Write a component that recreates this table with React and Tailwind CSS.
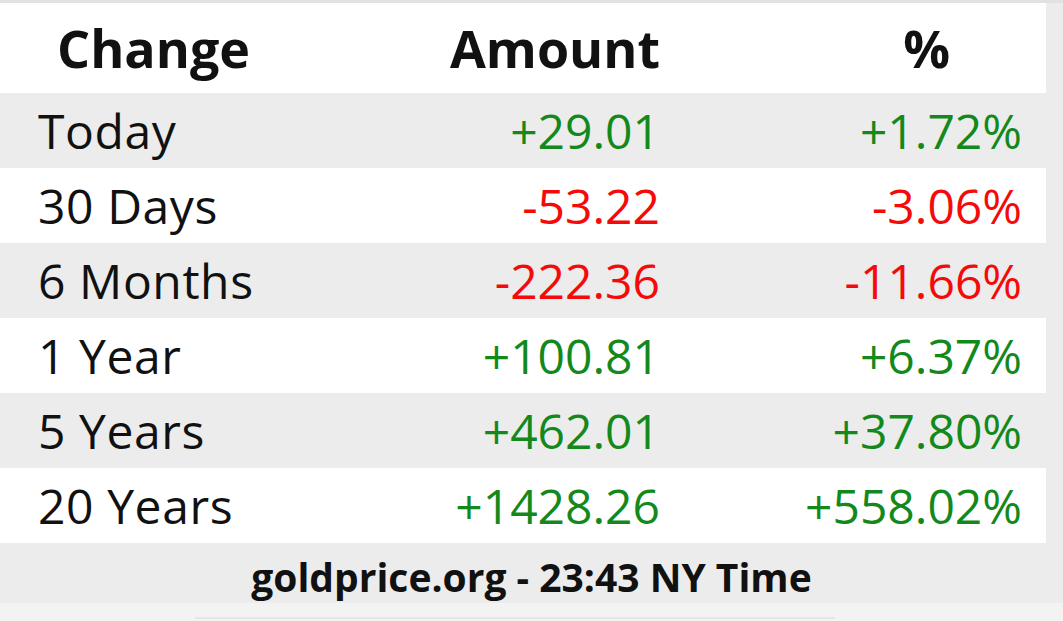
import React from 'react';

const rows = [
  { label: 'Today', amount: '+29.01', pct: '+1.72%', up: true },
  { label: '30 Days', amount: '-53.22', pct: '-3.06%', up: false },
  { label: '6 Months', amount: '-222.36', pct: '-11.66%', up: false },
  { label: '1 Year', amount: '+100.81', pct: '+6.37%', up: true },
  { label: '5 Years', amount: '+462.01', pct: '+37.80%', up: true },
  { label: '20 Years', amount: '+1428.26', pct: '+558.02%', up: true },
];

export default function App() {
  return (
    <div
      className="w-[1063px] h-[621px] bg-[#f3f3f3] overflow-hidden"
      style={{ fontFamily: '"Open Sans", "Liberation Sans", sans-serif' }}
    >
      <div className="h-[3px] bg-[#e2e2e2]" />
      <div className="bg-[#ececec]">
        {/* Header */}
        <div className="flex h-[90px] items-center">
          <div className="w-[1046px] h-full bg-white grid grid-cols-[300px_360px_362px] items-center text-[52px] font-bold text-[#111]">
            <div className="pl-[57px]">Change</div>
            <div className="text-right">Amount</div>
            <div className="text-right pr-[72px]">%</div>
          </div>
        </div>

        {/* Rows */}
        {rows.map((r, i) => (
          <div key={r.label} className="flex h-[75px]">
            <div
              className={`w-[1046px] h-full grid grid-cols-[300px_360px_362px] items-center text-[48px] ${
                i % 2 === 0 ? 'bg-[#ececec]' : 'bg-white'
              }`}
            >
              <div className="pl-[38px] text-[#111] tracking-[0.6px]">{r.label}</div>
              <div className={`text-right ${r.up ? 'text-[#13891b]' : 'text-[#f50a0a]'}`}>{r.amount}</div>
              <div className={`text-right ${r.up ? 'text-[#13891b]' : 'text-[#f50a0a]'}`}>{r.pct}</div>
            </div>
          </div>
        ))}

        {/* Footer */}
        <div className="h-[60px] flex items-center justify-center pt-[8px] text-[39px] font-bold text-[#111]">
          goldprice.org - 23:43 NY Time
        </div>
      </div>
      <div className="h-[16px] flex items-end pl-[195px]">
        <div className="w-[640px] h-[2px] bg-[#e6e6e6]" />
      </div>
    </div>
  );
}
